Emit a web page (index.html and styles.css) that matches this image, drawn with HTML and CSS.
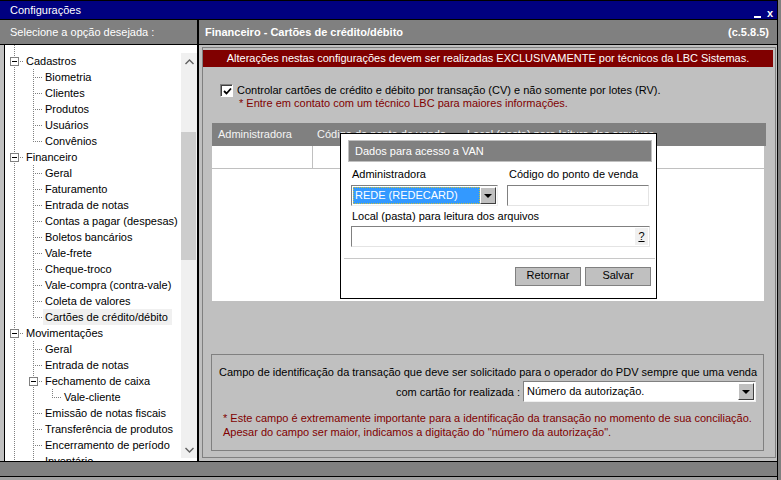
FILE: index.html
```html
<!DOCTYPE html>
<html lang="pt-BR">
<head>
<meta charset="utf-8">
<title>Configurações</title>
<link rel="stylesheet" href="styles.css">
</head>
<body>
<div class="win">
  <div class="titlebar">
    <span class="ttl">Configurações</span>
    <span class="ctrls"><span class="min"></span><span class="cls">x</span></span>
  </div>
  <div class="hdr">
    <div class="hdr-left">Selecione a opção desejada :</div>
    <div class="hdr-right"><span>Financeiro - Cartões de crédito/débito</span><span>(c.5.8.5)</span></div>
  </div>
  <div class="main">
    <div class="left">
      <div class="tree">
        <div class="items">
          <div class="row top"><span class="c v"></span></div>
          <div class="row"><span class="c rb"><i class="box"></i></span><span class="lbl">Cadastros</span></div>
          <div class="row"><span class="c v"></span><span class="c t"></span><span class="lbl">Biometria</span></div>
          <div class="row"><span class="c v"></span><span class="c t"></span><span class="lbl">Clientes</span></div>
          <div class="row"><span class="c v"></span><span class="c t"></span><span class="lbl">Produtos</span></div>
          <div class="row"><span class="c v"></span><span class="c t"></span><span class="lbl">Usuários</span></div>
          <div class="row"><span class="c v"></span><span class="c l"></span><span class="lbl">Convênios</span></div>
          <div class="row"><span class="c rb"><i class="box"></i></span><span class="lbl">Financeiro</span></div>
          <div class="row"><span class="c v"></span><span class="c t"></span><span class="lbl">Geral</span></div>
          <div class="row"><span class="c v"></span><span class="c t"></span><span class="lbl">Faturamento</span></div>
          <div class="row"><span class="c v"></span><span class="c t"></span><span class="lbl">Entrada de notas</span></div>
          <div class="row"><span class="c v"></span><span class="c t"></span><span class="lbl">Contas a pagar (despesas)</span></div>
          <div class="row"><span class="c v"></span><span class="c t"></span><span class="lbl">Boletos bancários</span></div>
          <div class="row"><span class="c v"></span><span class="c t"></span><span class="lbl">Vale-frete</span></div>
          <div class="row"><span class="c v"></span><span class="c t"></span><span class="lbl">Cheque-troco</span></div>
          <div class="row"><span class="c v"></span><span class="c t"></span><span class="lbl">Vale-compra (contra-vale)</span></div>
          <div class="row"><span class="c v"></span><span class="c t"></span><span class="lbl">Coleta de valores</span></div>
          <div class="row"><span class="c v"></span><span class="c l"></span><span class="lbl sel">Cartões de crédito/débito</span></div>
          <div class="row"><span class="c rb"><i class="box"></i></span><span class="lbl">Movimentações</span></div>
          <div class="row"><span class="c v"></span><span class="c t"></span><span class="lbl">Geral</span></div>
          <div class="row"><span class="c v"></span><span class="c t"></span><span class="lbl">Entrada de notas</span></div>
          <div class="row"><span class="c v"></span><span class="c rb"><i class="box"></i></span><span class="lbl">Fechamento de caixa</span></div>
          <div class="row"><span class="c v"></span><span class="c v"></span><span class="c l"></span><span class="lbl">Vale-cliente</span></div>
          <div class="row"><span class="c v"></span><span class="c t"></span><span class="lbl">Emissão de notas fiscais</span></div>
          <div class="row"><span class="c v"></span><span class="c t"></span><span class="lbl">Transferência de produtos</span></div>
          <div class="row"><span class="c v"></span><span class="c t"></span><span class="lbl">Encerramento de período</span></div>
          <div class="row"><span class="c v"></span><span class="c t"></span><span class="lbl">Inventário</span></div>
        </div>
        <div class="sb">
          <div class="sb-btn"><svg width="9" height="6" viewBox="0 0 9 6"><polyline points="0.5,5 4.5,1 8.5,5" fill="none" stroke="#606060" stroke-width="1.4"/></svg></div>
          <div class="sb-track"><div class="sb-thumb"></div></div>
          <div class="sb-btn"><svg width="9" height="6" viewBox="0 0 9 6"><polyline points="0.5,1 4.5,5 8.5,1" fill="none" stroke="#606060" stroke-width="1.4"/></svg></div>
        </div>
      </div>
    </div>
    <div class="right">
      <div class="box">
        <div class="banner">Alterações nestas configurações devem ser realizadas EXCLUSIVAMENTE por técnicos da LBC Sistemas.</div>
        <div class="cbrow">
          <span class="chk"><svg width="9" height="9" viewBox="0 0 9 9"><path d="M1 4 L3.5 6.5 L8 1.5" fill="none" stroke="#000" stroke-width="1.8"/></svg></span>
          <span>Controlar cartões de crédito e débito por transação (CV) e não somente por lotes (RV).</span>
        </div>
        <div class="note">* Entre em contato com um técnico LBC para maiores informações.</div>
        <div class="grid">
          <div class="ghead">
            <span class="gc1">Administradora</span>
            <span class="gc2">Código do ponto de venda</span>
            <span class="gc3">Local (pasta) para leitura dos arquivos</span>
          </div>
          <div class="gbody">
            <div class="grow"><span class="gc1"></span><span class="gc2"></span><span class="gc3"></span></div>
          </div>
        </div>
        <div class="panel">
          <div class="pline">Campo de identificação da transação que deve ser solicitado para o operador do PDV sempre que uma venda</div>
          <div class="prow">
            <span>com cartão for realizada :</span>
            <span class="combo wide"><span class="combo-val">Número da autorização.</span><span class="dd"><i class="tri"></i></span></span>
          </div>
          <div class="pnote">* Este campo é extremamente importante para a identificação da transação no momento de sua conciliação.<br>Apesar do campo ser maior, indicamos a digitação do "número da autorização".</div>
        </div>
        <div class="dialog">
          <div class="dtitle">Dados para acesso a VAN</div>
          <div class="dform">
            <span class="dlbl">Administradora</span>
            <span class="dlbl c2">Código do ponto de venda</span>
            <span class="combo"><span class="combo-val hl">REDE (REDECARD)</span><span class="dd"><i class="tri"></i></span></span>
            <span class="field"></span>
            <span class="dlbl span2 l2">Local (pasta) para leitura dos arquivos</span>
            <span class="field span2 pathf"><span class="q">?</span></span>
          </div>
          <div class="dsep"></div>
          <div class="dbtns"><span class="btn">Retornar</span><span class="btn">Salvar</span></div>
        </div>
      </div>
    </div>
  </div>
  <div class="status"></div>
  <div class="foot"></div>
</div>
</body>
</html>
```

FILE: styles.css
```css
* { box-sizing: border-box; }
body {
  margin: 0;
  background: #808080;
  font: 11px "Liberation Sans", Arial, sans-serif;
  color: #000;
}
.win {
  width: 778px;
  height: 480px;
  border-right: 1px solid #000;
  display: flex;
  flex-direction: column;
  background: #c0c0c0;
}
.titlebar {
  height: 20px;
  background: #000080;
  border-top: 1px solid #000;
  border-bottom: 1px solid #000;
  color: #fff;
  display: flex;
  justify-content: space-between;
  padding: 3px 3px 0 10px;
  line-height: 13px;
}
.ctrls { display: flex; align-items: flex-end; gap: 6px; padding-right: 1px; }
.min { width: 7px; height: 2px; background: #fff; margin-bottom: 1px; }
.cls { font-weight: bold; font-size: 11px; line-height: 11px; margin-top: 2px; }
.hdr {
  height: 25px;
  display: flex;
  background: #808080;
  color: #fff;
  border-bottom: 1px solid #000;
  line-height: 24px;
}
.hdr-left { width: 199px; padding-left: 10px; border-right: 2px solid #000; }
.hdr-right {
  flex: 1;
  display: flex;
  justify-content: space-between;
  padding: 0 8px 0 6px;
  font-weight: bold;
}
.main { height: 416px; display: flex; }
.left {
  width: 199px;
  border-right: 2px solid #000;
  background: #c0c0c0;
  padding-left: 4px;
  display: flex;
}
.tree {
  flex: 1;
  background: #fff;
  border-left: 1px solid #000;
  display: flex;
  overflow: hidden;
}
.items { flex: 1; overflow: hidden; }
.row { height: 16px; display: flex; align-items: center; white-space: nowrap; }
.row.top { height: 8px; }
.c {
  width: 19px;
  height: 100%;
  flex: none;
  display: flex;
  align-items: center;
}
.c.v {
  background: repeating-linear-gradient(to bottom, #808080 0 1px, transparent 1px 2px) 9px 0 / 1px 100% no-repeat;
}
.c.t {
  background:
    repeating-linear-gradient(to bottom, #808080 0 1px, transparent 1px 2px) 9px 0 / 1px 100% no-repeat,
    repeating-linear-gradient(to right, #808080 0 1px, transparent 1px 2px) 11px 8px / 8px 1px no-repeat;
}
.c.l {
  background:
    repeating-linear-gradient(to bottom, #808080 0 1px, transparent 1px 2px) 9px 0 / 1px 9px no-repeat,
    repeating-linear-gradient(to right, #808080 0 1px, transparent 1px 2px) 11px 8px / 8px 1px no-repeat;
}
.c.rb {
  background:
    repeating-linear-gradient(to bottom, #808080 0 1px, transparent 1px 2px) 9px 0 / 1px 100% no-repeat,
    repeating-linear-gradient(to right, #808080 0 1px, transparent 1px 2px) 15px 8px / 4px 1px no-repeat;
}
.box {
  width: 9px;
  height: 9px;
  margin-left: 5px;
  border: 1px solid #808080;
  background: #fff linear-gradient(#000, #000) center / 5px 1px no-repeat;
}
.lbl { padding: 0 2px; line-height: 16px; height: 16px; }
.lbl.sel { background: #f0f0f0; padding-right: 4px; }
.sb {
  width: 16px;
  flex: none;
  margin-top: 8px;
  margin-bottom: 3px;
  background: #f0f0f0;
  display: flex;
  flex-direction: column;
}
.sb-btn { height: 17px; display: flex; align-items: center; justify-content: center; }
.sb-track { flex: 1; }
.sb-thumb { margin: 62px 1px 0 0; height: 128px; background: #cdcdcd; }
.right {
  flex: 1;
  background: #c0c0c0;
  padding: 2px 1px 0 3px;
}
.right > .box {
  height: 411px;
  border: 1px solid #808080;
  position: relative;
  display: flex;
  flex-direction: column;
  width: auto;
  margin: 0;
  background: none;
}
.banner {
  margin: 2px 2px 0 0;
  height: 17px;
  line-height: 17px;
  background: #800000;
  color: #fff;
  text-align: center;
}
.cbrow {
  margin-top: 17px;
  padding-left: 17px;
  display: flex;
  align-items: center;
  gap: 4px;
  height: 13px;
  line-height: 13px;
}
.chk {
  width: 13px;
  height: 13px;
  background: #fff;
  border-top: 1px solid #808080;
  border-left: 1px solid #808080;
  border-right: 1px solid #fff;
  border-bottom: 1px solid #fff;
  box-shadow: inset 1px 1px 0 #404040;
  display: flex;
  align-items: center;
  justify-content: center;
  padding: 1px 0 0 1px;
}
.note { padding-left: 36px; line-height: 13px; color: #800000; }
.grid { margin: 13px 9px 0 9px; }
.ghead {
  height: 23px;
  line-height: 23px;
  background: #808080;
  color: #f4f4f4;
  display: flex;
  white-space: nowrap;
  overflow: hidden;
}
.gc1 { width: 101px; padding-left: 6px; flex: none; }
.gc2 { width: 150px; padding-left: 4px; flex: none; }
.gc3 { flex: 1; padding-left: 4px; }
.gbody { height: 155px; background: #fff; margin-right: 2px; }
.grow { height: 23px; display: flex; border-bottom: 1px solid #c0c0c0; }
.grow .gc1 { border-right: 1px solid #c0c0c0; }
.grow .gc2 { border-right: 1px solid #c0c0c0; }
.panel {
  margin: 53px 11px 0 8px;
  height: 97px;
  border: 1px solid #808080;
  padding-top: 10px;
}
.pline { padding-left: 7px; line-height: 14px; white-space: nowrap; }
.prow {
  margin-top: 2px;
  display: flex;
  justify-content: flex-end;
  align-items: center;
  gap: 3px;
  padding-right: 7px;
}
.combo {
  height: 21px;
  display: flex;
  align-items: center;
  background: #fff;
  border-top: 1px solid #808080;
  border-left: 1px solid #808080;
  border-right: 1px solid #f0f0f0;
  border-bottom: 1px solid #f0f0f0;
  padding: 1px;
}
.combo.wide { width: 233px; }
.combo-val { flex: 1; height: 17px; line-height: 17px; padding-left: 2px; white-space: nowrap; }
.combo-val.hl { background: #3399ff; color: #fff; outline: 1px dotted #c8c040; outline-offset: -1px; }
.dd {
  width: 16px;
  height: 17px;
  background: #c0c0c0;
  border-top: 1px solid #fff;
  border-left: 1px solid #fff;
  border-right: 1px solid #404040;
  border-bottom: 1px solid #404040;
  display: flex;
  align-items: center;
  justify-content: center;
}
.tri { width: 0; height: 0; border-left: 4px solid transparent; border-right: 4px solid transparent; border-top: 4px solid #000; }
.pnote { margin-top: 9px; padding-left: 11px; line-height: 14px; color: #800000; white-space: nowrap; }
.dialog {
  position: absolute;
  left: 137px;
  top: 85px;
  width: 317px;
  height: 166px;
  border: 1px solid #000;
  background: #fff;
}
.dtitle {
  margin: 6px 0 0 7px;
  width: 304px;
  height: 22px;
  border: 1px solid #c0c0c0;
  background: #808080;
  color: #fff;
  padding-left: 6px;
  line-height: 20px;
}
.dform {
  margin-top: 6px;
  padding-left: 10px;
  display: grid;
  grid-template-columns: 147px 142px;
  column-gap: 9px;
  row-gap: 4px;
}
.dlbl { line-height: 13px; padding-left: 1px; }
.dlbl.c2 { padding-left: 2px; }
.span2 { grid-column: 1 / 3; }
.field {
  height: 21px;
  background: #fff;
  border-top: 1px solid #808080;
  border-left: 1px solid #808080;
  border-right: 1px solid #e4e4e4;
  border-bottom: 1px solid #e4e4e4;
  display: flex;
  justify-content: flex-end;
}
.pathf { width: 299px; margin-top: -1px; padding: 1px; }
.q {
  width: 13px;
  background: #f0f0f0;
  text-decoration: underline;
  text-align: center;
  line-height: 17px;
}
.dsep { margin: 11px 0 0 3px; width: 311px; height: 1px; background: #c8c8c8; }
.dbtns { margin-top: 8px; padding-right: 5px; display: flex; justify-content: flex-end; gap: 4px; }
.btn {
  width: 66px;
  height: 19px;
  background: #c0c0c0;
  border: 1px solid #808080;
  text-align: center;
  line-height: 15px;
}
.status {
  height: 16px;
  background: #808080;
  border-top: 1px solid #000;
  border-bottom: 1px solid #000;
}
.foot { flex: 1; background: #a0a0a0; }
```
